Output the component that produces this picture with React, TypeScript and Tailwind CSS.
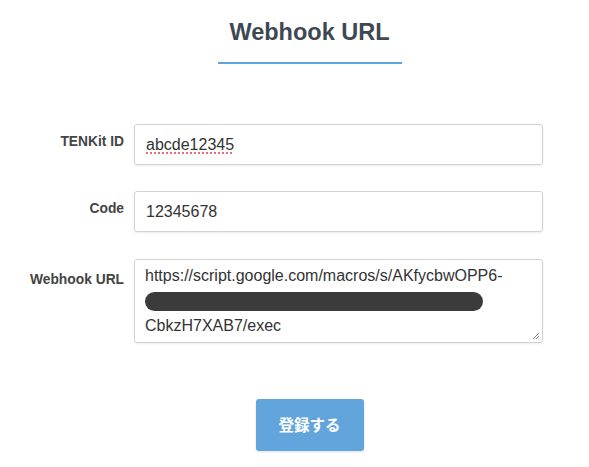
import { useState } from 'react'

const sans = { fontFamily: '"Liberation Sans", Arial, sans-serif' }

function Field({ label, children, top = 'pt-[10px]' }: { label: string; children: React.ReactNode; top?: string }) {
  return (
    <div className="flex gap-[10px]">
      <label className={`w-[94px] shrink-0 whitespace-nowrap text-right text-[13.8px] leading-[16px] font-bold text-[#444] ${top}`}>
        {label}
      </label>
      {children}
    </div>
  )
}

export default function App() {
  const [tenkitId, setTenkitId] = useState('abcde12345')
  const [code, setCode] = useState('12345678')

  return (
    <div className="min-h-[467px] bg-white pl-[30px] pt-[18px]" style={sans}>
      <div className="flex flex-col items-center">
        <h1 className="text-[23.5px] leading-[28px] font-bold text-[#3e4852]">Webhook URL</h1>
        <div className="mt-[16px] h-[2px] w-[184px] bg-[#5fa3dc]" />
      </div>

      <form className="mt-[60px] flex flex-col">
        <Field label="TENKit ID">
          <input
            value={tenkitId}
            onChange={(e) => setTenkitId(e.target.value)}
            className="h-[41px] w-[409px] rounded-[3px] border border-[#d2d2d2] px-[11px] text-[16px] text-[#333] underline decoration-dotted decoration-[#e5484d] underline-offset-[3px] shadow-[0_1px_2px_rgba(0,0,0,0.08)] outline-none"
          />
        </Field>

        <div className="mt-[26px]">
          <Field label="Code">
            <input
              value={code}
              onChange={(e) => setCode(e.target.value)}
              className="h-[41px] w-[409px] rounded-[3px] border border-[#d2d2d2] px-[11px] text-[16px] text-[#333] shadow-[0_1px_2px_rgba(0,0,0,0.08)] outline-none"
            />
          </Field>
        </div>

        <div className="mt-[27px]">
          <Field label="Webhook URL" top="pt-[13px]">
            <div className="relative h-[84px] w-[409px] rounded-[3px] border border-[#d2d2d2] px-[10px] pt-[3px] text-[16px] leading-[25px] text-[#333] shadow-[0_1px_2px_rgba(0,0,0,0.08)]">
              <div>https://script.google.com/macros/s/AKfycbwOPP6-</div>
              <div className="flex h-[25px] items-center pt-[2px]">
                <span className="block h-[19px] w-[338px] rounded-full bg-[#3b3b3b]" />
              </div>
              <div>CbkzH7XAB7/exec</div>
              <svg className="absolute bottom-[2px] right-[2px]" width="8" height="8" viewBox="0 0 8 8">
                <path d="M7 1L1 7M7 4L4 7" stroke="#888" strokeWidth="1" />
              </svg>
            </div>
          </Field>
        </div>

        <div className="mt-[56px] flex justify-center">
          <button
            type="button"
            className="h-[52px] w-[108px] rounded-[3px] bg-[#62a5dc] text-[15.5px] font-bold text-white shadow-[0_1px_3px_rgba(0,0,0,0.12)]"
            style={{ fontFamily: '"Noto Sans CJK JP", "Liberation Sans", sans-serif' }}
          >
            登録する
          </button>
        </div>
      </form>
    </div>
  )
}
